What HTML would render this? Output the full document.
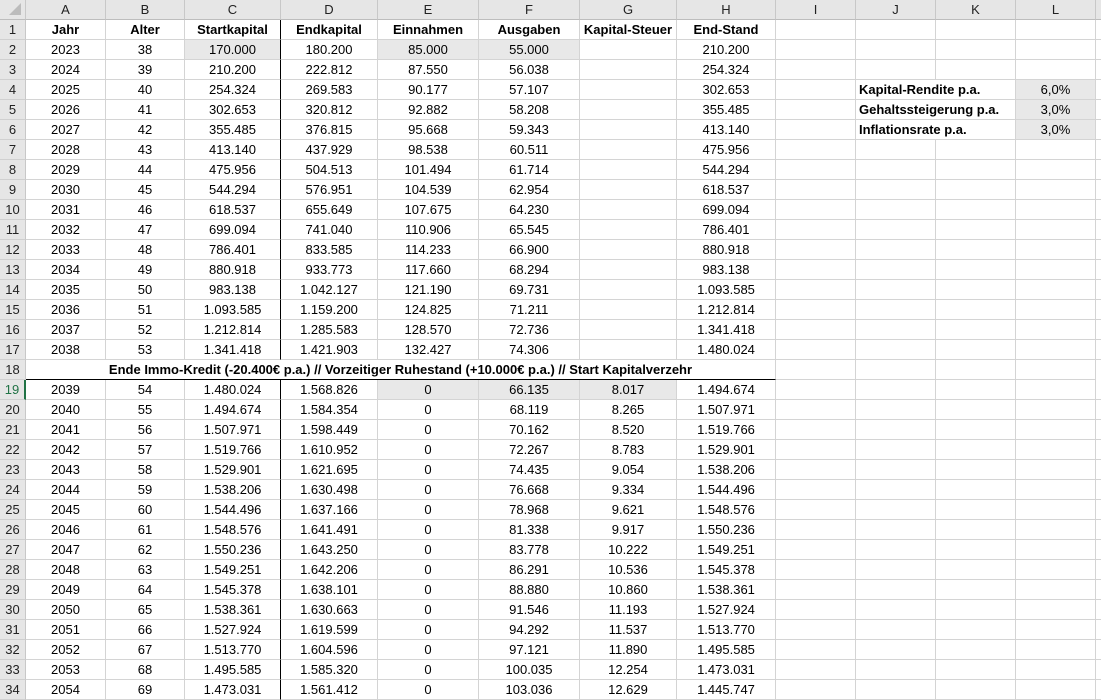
<!DOCTYPE html>
<html><head><meta charset="utf-8"><style>
*{box-sizing:border-box;margin:0;padding:0}
body{width:1101px;height:698px;overflow:hidden;background:#fff;font-family:"Liberation Sans",sans-serif;font-size:13px;color:#000}
.r{display:flex;height:20px}
.r>div{height:20px;border-right:1px solid #d4d4d4;border-bottom:1px solid #d4d4d4;text-align:center;line-height:19px;white-space:nowrap;overflow:hidden;flex:none}
.r>div:nth-child(1){width:26px;background:#e6e6e6;border-right:1px solid #c8c8c8;border-bottom:1px solid #d0d0d0;color:#222}
.r>div:nth-child(2){width:80px}
.r>div:nth-child(3){width:79px}
.r>div:nth-child(4){width:96px;border-right:1px solid #000}
.r>div:nth-child(5){width:97px}
.r>div:nth-child(6){width:101px}
.r>div:nth-child(7){width:101px}
.r>div:nth-child(8){width:97px}
.r>div:nth-child(9){width:99px}
.r>div:nth-child(10){width:80px}
.r>div:nth-child(11){width:80px}
.r>div:nth-child(12){width:80px}
.r>div:nth-child(13){width:80px}
.r>div:nth-child(14){width:10px;border-right:none}
.h>div{background:#e6e6e6;border-right:1px solid #c8c8c8 !important;border-bottom:1px solid #bdbdbd !important;color:#222}
.b>div{font-weight:bold}
.g{background:#e8e8e8}
.r>div.jk{width:160px;text-align:left;padding-left:3px;font-weight:bold}
.r>div.m{width:750px;font-weight:bold;border-right:1px solid #d4d4d4;border-bottom:1px solid #000}
.r>div.sel{color:#217346;border-right:2px solid #217346}
.r>div.x{width:80px;border-right:1px solid #d4d4d4}
.hdr0{position:relative}
.tri{position:absolute;right:4px;bottom:4px;width:0;height:0;border-left:12px solid transparent;border-bottom:12px solid #bcbcbc}
</style></head><body>
<div class="r h"><div class="hdr0"><span class="tri"></span></div><div>A</div><div>B</div><div>C</div><div>D</div><div>E</div><div>F</div><div>G</div><div>H</div><div>I</div><div>J</div><div>K</div><div>L</div><div></div></div>
<div class="r b"><div style="font-weight:normal">1</div><div>Jahr</div><div>Alter</div><div>Startkapital</div><div>Endkapital</div><div>Einnahmen</div><div>Ausgaben</div><div>Kapital-Steuer</div><div>End-Stand</div><div></div><div></div><div></div><div></div><div></div></div>
<div class="r"><div>2</div><div>2023</div><div>38</div><div class="g">170.000</div><div>180.200</div><div class="g">85.000</div><div class="g">55.000</div><div></div><div>210.200</div><div></div><div></div><div></div><div></div><div></div></div>
<div class="r"><div>3</div><div>2024</div><div>39</div><div>210.200</div><div>222.812</div><div>87.550</div><div>56.038</div><div></div><div>254.324</div><div></div><div></div><div></div><div></div><div></div></div>
<div class="r"><div>4</div><div>2025</div><div>40</div><div>254.324</div><div>269.583</div><div>90.177</div><div>57.107</div><div></div><div>302.653</div><div></div><div class="jk">Kapital-Rendite p.a.</div><div class="g">6,0%</div><div></div></div>
<div class="r"><div>5</div><div>2026</div><div>41</div><div>302.653</div><div>320.812</div><div>92.882</div><div>58.208</div><div></div><div>355.485</div><div></div><div class="jk">Gehaltssteigerung p.a.</div><div class="g">3,0%</div><div></div></div>
<div class="r"><div>6</div><div>2027</div><div>42</div><div>355.485</div><div>376.815</div><div>95.668</div><div>59.343</div><div></div><div>413.140</div><div></div><div class="jk">Inflationsrate p.a.</div><div class="g">3,0%</div><div></div></div>
<div class="r"><div>7</div><div>2028</div><div>43</div><div>413.140</div><div>437.929</div><div>98.538</div><div>60.511</div><div></div><div>475.956</div><div></div><div></div><div></div><div></div><div></div></div>
<div class="r"><div>8</div><div>2029</div><div>44</div><div>475.956</div><div>504.513</div><div>101.494</div><div>61.714</div><div></div><div>544.294</div><div></div><div></div><div></div><div></div><div></div></div>
<div class="r"><div>9</div><div>2030</div><div>45</div><div>544.294</div><div>576.951</div><div>104.539</div><div>62.954</div><div></div><div>618.537</div><div></div><div></div><div></div><div></div><div></div></div>
<div class="r"><div>10</div><div>2031</div><div>46</div><div>618.537</div><div>655.649</div><div>107.675</div><div>64.230</div><div></div><div>699.094</div><div></div><div></div><div></div><div></div><div></div></div>
<div class="r"><div>11</div><div>2032</div><div>47</div><div>699.094</div><div>741.040</div><div>110.906</div><div>65.545</div><div></div><div>786.401</div><div></div><div></div><div></div><div></div><div></div></div>
<div class="r"><div>12</div><div>2033</div><div>48</div><div>786.401</div><div>833.585</div><div>114.233</div><div>66.900</div><div></div><div>880.918</div><div></div><div></div><div></div><div></div><div></div></div>
<div class="r"><div>13</div><div>2034</div><div>49</div><div>880.918</div><div>933.773</div><div>117.660</div><div>68.294</div><div></div><div>983.138</div><div></div><div></div><div></div><div></div><div></div></div>
<div class="r"><div>14</div><div>2035</div><div>50</div><div>983.138</div><div>1.042.127</div><div>121.190</div><div>69.731</div><div></div><div>1.093.585</div><div></div><div></div><div></div><div></div><div></div></div>
<div class="r"><div>15</div><div>2036</div><div>51</div><div>1.093.585</div><div>1.159.200</div><div>124.825</div><div>71.211</div><div></div><div>1.212.814</div><div></div><div></div><div></div><div></div><div></div></div>
<div class="r"><div>16</div><div>2037</div><div>52</div><div>1.212.814</div><div>1.285.583</div><div>128.570</div><div>72.736</div><div></div><div>1.341.418</div><div></div><div></div><div></div><div></div><div></div></div>
<div class="r"><div>17</div><div>2038</div><div>53</div><div>1.341.418</div><div>1.421.903</div><div>132.427</div><div>74.306</div><div></div><div>1.480.024</div><div></div><div></div><div></div><div></div><div></div></div>
<div class="r"><div>18</div><div class="m">Ende Immo-Kredit (-20.400€ p.a.) // Vorzeitiger Ruhestand (+10.000€ p.a.) // Start Kapitalverzehr</div><div class="x"></div><div class="x"></div><div class="x"></div><div class="x"></div></div>
<div class="r"><div class="sel">19</div><div>2039</div><div>54</div><div>1.480.024</div><div>1.568.826</div><div class="g">0</div><div class="g">66.135</div><div class="g">8.017</div><div>1.494.674</div><div></div><div></div><div></div><div></div><div></div></div>
<div class="r"><div>20</div><div>2040</div><div>55</div><div>1.494.674</div><div>1.584.354</div><div>0</div><div>68.119</div><div>8.265</div><div>1.507.971</div><div></div><div></div><div></div><div></div><div></div></div>
<div class="r"><div>21</div><div>2041</div><div>56</div><div>1.507.971</div><div>1.598.449</div><div>0</div><div>70.162</div><div>8.520</div><div>1.519.766</div><div></div><div></div><div></div><div></div><div></div></div>
<div class="r"><div>22</div><div>2042</div><div>57</div><div>1.519.766</div><div>1.610.952</div><div>0</div><div>72.267</div><div>8.783</div><div>1.529.901</div><div></div><div></div><div></div><div></div><div></div></div>
<div class="r"><div>23</div><div>2043</div><div>58</div><div>1.529.901</div><div>1.621.695</div><div>0</div><div>74.435</div><div>9.054</div><div>1.538.206</div><div></div><div></div><div></div><div></div><div></div></div>
<div class="r"><div>24</div><div>2044</div><div>59</div><div>1.538.206</div><div>1.630.498</div><div>0</div><div>76.668</div><div>9.334</div><div>1.544.496</div><div></div><div></div><div></div><div></div><div></div></div>
<div class="r"><div>25</div><div>2045</div><div>60</div><div>1.544.496</div><div>1.637.166</div><div>0</div><div>78.968</div><div>9.621</div><div>1.548.576</div><div></div><div></div><div></div><div></div><div></div></div>
<div class="r"><div>26</div><div>2046</div><div>61</div><div>1.548.576</div><div>1.641.491</div><div>0</div><div>81.338</div><div>9.917</div><div>1.550.236</div><div></div><div></div><div></div><div></div><div></div></div>
<div class="r"><div>27</div><div>2047</div><div>62</div><div>1.550.236</div><div>1.643.250</div><div>0</div><div>83.778</div><div>10.222</div><div>1.549.251</div><div></div><div></div><div></div><div></div><div></div></div>
<div class="r"><div>28</div><div>2048</div><div>63</div><div>1.549.251</div><div>1.642.206</div><div>0</div><div>86.291</div><div>10.536</div><div>1.545.378</div><div></div><div></div><div></div><div></div><div></div></div>
<div class="r"><div>29</div><div>2049</div><div>64</div><div>1.545.378</div><div>1.638.101</div><div>0</div><div>88.880</div><div>10.860</div><div>1.538.361</div><div></div><div></div><div></div><div></div><div></div></div>
<div class="r"><div>30</div><div>2050</div><div>65</div><div>1.538.361</div><div>1.630.663</div><div>0</div><div>91.546</div><div>11.193</div><div>1.527.924</div><div></div><div></div><div></div><div></div><div></div></div>
<div class="r"><div>31</div><div>2051</div><div>66</div><div>1.527.924</div><div>1.619.599</div><div>0</div><div>94.292</div><div>11.537</div><div>1.513.770</div><div></div><div></div><div></div><div></div><div></div></div>
<div class="r"><div>32</div><div>2052</div><div>67</div><div>1.513.770</div><div>1.604.596</div><div>0</div><div>97.121</div><div>11.890</div><div>1.495.585</div><div></div><div></div><div></div><div></div><div></div></div>
<div class="r"><div>33</div><div>2053</div><div>68</div><div>1.495.585</div><div>1.585.320</div><div>0</div><div>100.035</div><div>12.254</div><div>1.473.031</div><div></div><div></div><div></div><div></div><div></div></div>
<div class="r"><div>34</div><div>2054</div><div>69</div><div>1.473.031</div><div>1.561.412</div><div>0</div><div>103.036</div><div>12.629</div><div>1.445.747</div><div></div><div></div><div></div><div></div><div></div></div>
</body></html>
